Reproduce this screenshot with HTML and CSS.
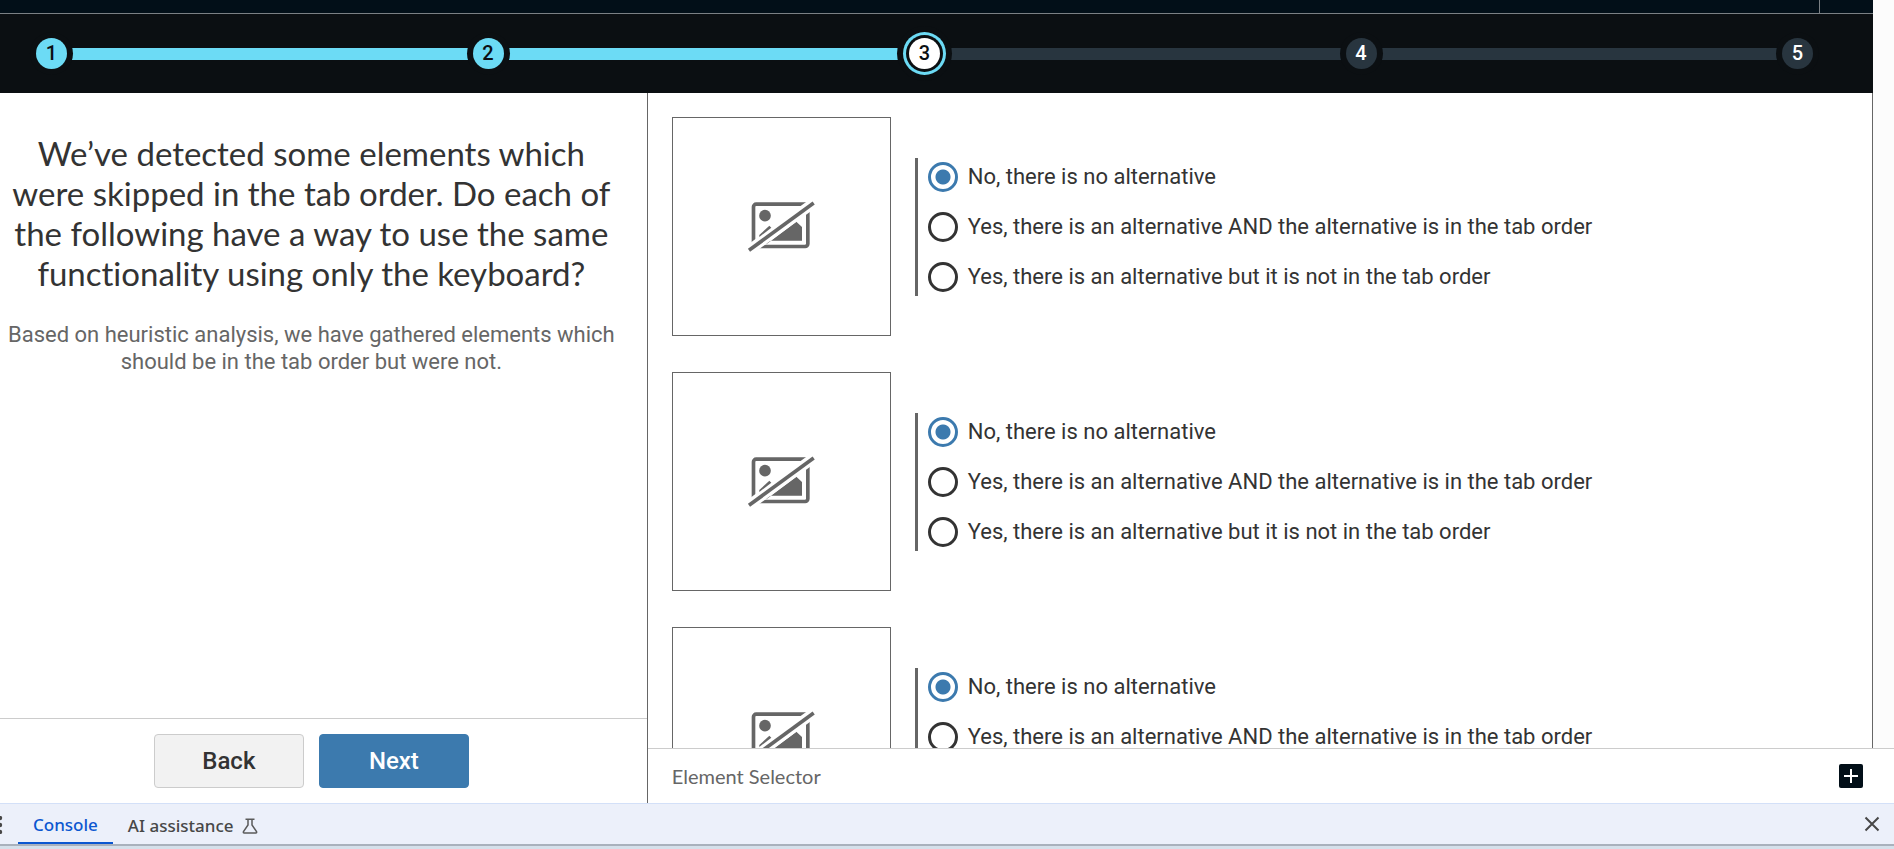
FILE: index.html
```html
<!DOCTYPE html>
<html lang="en">
<head>
<meta charset="utf-8">
<title>Keyboard guided test</title>
<link rel="stylesheet" href="styles.css">
</head>
<body>
<svg class="defs" aria-hidden="true">
  <symbol id="no-image" viewBox="49 57 210 165">
    <rect x="71.500" y="72.500" width="163" height="127" rx="8" fill="none" stroke="#666" stroke-width="11"/>
    <circle cx="106" cy="107" r="17.500" fill="#666"/>
    <path d="M110 193 L200 125 L217 141 V182 H110Z" fill="#666"/>
    <path d="M42 222 L268 57" stroke="#fff" stroke-width="31"/>
    <path d="M89 171 V165 L119 137 L125 143Z" fill="#666"/>
    <path d="M58 211 L252 69" stroke="#666" stroke-width="11"/>
  </symbol>
</svg>
<main class="app">
  <div class="topbar"><div class="topbar-action"></div></div>
  <ol class="steps">
    <li class="step done"><span class="dot">1</span></li>
    <li class="step done"><span class="dot">2</span></li>
    <li class="step current" aria-current="step"><span class="dot">3</span></li>
    <li class="step"><span class="dot">4</span></li>
    <li class="step"><span class="dot">5</span></li>
  </ol>
  <div class="panes">
    <section class="question">
      <div class="question-text">
        <h1>We’ve detected some elements which were skipped in the tab order. Do each of the following have a way to use the same functionality using only the keyboard?</h1>
        <p>Based on heuristic analysis, we have gathered elements which should be in the tab order but were not.</p>
      </div>
      <div class="actions">
        <button class="btn" type="button">Back</button>
        <button class="btn primary" type="button">Next</button>
      </div>
    </section>
    <section class="answers">
      <div class="items">
        <div class="item">
          <div class="thumb"><svg class="thumb-icon"><use href="#no-image"/></svg></div>
          <div class="options" role="radiogroup" aria-label="Element 1">
            <label class="option"><input type="radio" name="e1" checked>No, there is no alternative</label>
            <label class="option"><input type="radio" name="e1">Yes, there is an alternative AND the alternative is in the tab order</label>
            <label class="option"><input type="radio" name="e1">Yes, there is an alternative but it is not in the tab order</label>
          </div>
        </div>
        <div class="item">
          <div class="thumb"><svg class="thumb-icon"><use href="#no-image"/></svg></div>
          <div class="options" role="radiogroup" aria-label="Element 2">
            <label class="option"><input type="radio" name="e2" checked>No, there is no alternative</label>
            <label class="option"><input type="radio" name="e2">Yes, there is an alternative AND the alternative is in the tab order</label>
            <label class="option"><input type="radio" name="e2">Yes, there is an alternative but it is not in the tab order</label>
          </div>
        </div>
        <div class="item">
          <div class="thumb"><svg class="thumb-icon"><use href="#no-image"/></svg></div>
          <div class="options" role="radiogroup" aria-label="Element 3">
            <label class="option"><input type="radio" name="e3" checked>No, there is no alternative</label>
            <label class="option"><input type="radio" name="e3">Yes, there is an alternative AND the alternative is in the tab order</label>
            <label class="option"><input type="radio" name="e3">Yes, there is an alternative but it is not in the tab order</label>
          </div>
        </div>
      </div>
      <div class="selector">
        <span>Element Selector</span>
        <button class="expand" type="button" aria-label="Expand">
          <svg width="14" height="14" viewBox="0 0 14 14"><path d="M7 0V14M0 7H14" stroke="#fff" stroke-width="2"/></svg>
        </button>
      </div>
    </section>
  </div>
</main>
<footer class="drawer">
  <button class="more" type="button" aria-label="More tools">
    <svg width="3" height="18" viewBox="0 0 3 18" fill="#474747"><circle cx="0" cy="2" r="2.200"/><circle cx="0" cy="9" r="2.200"/><circle cx="0" cy="16" r="2.200"/></svg>
  </button>
  <button class="tab active" type="button">Console</button>
  <button class="tab" type="button">AI assistance
    <svg width="16" height="16" viewBox="0 0 16 16" fill="none" stroke="#5a5a5a" stroke-width="1.500"><path d="M3.500 1.200H12.500M6 1.200V7L1.500 13.500Q1 15 2.200 15H13.800Q15 15 14.500 13.500L10 7V1.200"/></svg>
  </button>
  <button class="close" type="button" aria-label="Close">
    <svg width="16" height="16" viewBox="0 0 16 16"><path d="M1.500 1.500L14.500 14.500M14.500 1.500L1.500 14.500" stroke="#474747" stroke-width="2"/></svg>
  </button>
</footer>
</body>
</html>
```
FILE: styles.css
```css
* { box-sizing: border-box; }

body {
  margin: 0;
  height: 100vh;
  display: flex;
  flex-direction: column;
  overflow: hidden;
  background: #fcfcfc;
  color: #333;
  font: 22px/28px Roboto, sans-serif;
}

button { font: inherit; color: inherit; border: 0; padding: 0; background: none; }

.defs { position: absolute; width: 0; height: 0; }

.app { flex: 1; min-height: 0; display: flex; flex-direction: column; }

.topbar {
  height: 14px;
  margin-right: 21px;
  padding-right: 53px;
  display: flex;
  justify-content: flex-end;
  background: #020f18;
  border-bottom: 1px solid #7b8084;
}
.topbar-action { border-right: 1px solid #7b8084; }

.steps {
  display: flex;
  align-items: center;
  height: 79px;
  margin: 0 21px 0 0;
  padding: 0 60px 0 36px;
  list-style: none;
  background: #0b0f12;
  color: #fff;
}
.step { flex: 1; display: flex; align-items: center; }
.step:last-child { flex: none; }
.step:not(:last-child)::after { content: ""; flex: 1; height: 12px; background: #28353f; }
.step.done::after { background: #6cdbf5; }
.dot {
  position: relative;
  z-index: 1;
  width: 31px;
  height: 31px;
  border-radius: 50%;
  text-align: center;
  font-size: 20px;
  line-height: 31px;
  font-weight: 500;
  background: #28353f;
  box-shadow: 0 0 0 6px #0b0f12;
}
.done .dot { background: #6cdbf5; color: #0b0f12; }
.current .dot {
  background: #fff;
  color: #0b0f12;
  box-shadow: 0 0 0 3px #0b0f12, 0 0 0 6px #6cdbf5, 0 0 0 12px #0b0f12;
}

.panes { flex: 1; min-height: 0; display: flex; }

.question {
  width: 34.2%;
  display: flex;
  flex-direction: column;
  border-right: 1px solid #666;
  background: #fff;
  text-align: center;
}
.question-text { flex: 1; padding: 40px 24px 0 0; }
h1 { margin: 0; font: 400 33px/40px Lato, sans-serif; font-variant-ligatures: none; }
p { margin: 28px 0 0; line-height: 27px; color: #666; }

.actions {
  display: flex;
  justify-content: center;
  gap: 15px;
  padding: 15px 24px 15px 0;
  border-top: 1px solid #ccc;
}
.btn {
  width: 150px;
  height: 54px;
  border: 1px solid #ccc;
  border-radius: 4px;
  background: #f2f2f2;
  font-size: 24px;
  font-weight: 500;
}
.btn.primary { border-color: #3c7aae; background: #3c7aae; color: #fff; }

.answers { flex: 1; min-width: 0; display: flex; flex-direction: column; }
.items {
  flex: 1;
  min-height: 0;
  overflow: hidden;
  display: flex;
  flex-direction: column;
  gap: 36px;
  margin-right: 21px;
  padding: 24px;
  background: #fff;
  border-right: 1px solid #666;
}
.item { flex: none; display: flex; align-items: center; gap: 24px; }
.thumb {
  display: flex;
  align-items: center;
  justify-content: center;
  width: 219px;
  height: 219px;
  border: 1px solid #666;
}
.thumb-icon { width: 70px; height: 55px; }
.options {
  display: flex;
  flex-direction: column;
  gap: 20px;
  padding: 4px 0 4px 10px;
  border-left: 3px solid #666;
}
.option { display: flex; align-items: center; gap: 10px; }
.option input {
  appearance: none;
  width: 30px;
  height: 30px;
  margin: 0;
  border: 3px solid #333;
  border-radius: 50%;
  background: #fff;
}
.option input:checked {
  border-color: #3c7aae;
  background: radial-gradient(circle, #3c7aae 7px, #fff 8px);
}

.selector {
  display: flex;
  align-items: center;
  justify-content: space-between;
  height: 55px;
  padding: 0 31px 0 24px;
  border-top: 1px solid #ccc;
  background: #fff;
  color: #666;
  font: 20px/26px Lato, sans-serif;
}
.expand {
  display: grid;
  place-items: center;
  width: 24px;
  height: 24px;
  border-radius: 2px;
  background: #020f18;
}

.drawer {
  display: flex;
  height: 46px;
  padding-right: 14px;
  border-top: 1px solid #d3e0f8;
  border-bottom: 3px solid #d5e0ea;
  box-shadow: inset 0 -2px #a9b1bc;
  background: #ecf0fa;
  color: #474747;
  font: 500 17px/24px "Noto Sans", sans-serif;
}
.more { display: grid; place-items: center start; width: 18px; }
.tab { display: flex; align-items: center; gap: 8px; padding: 2px 15px 0; }
.tab.active { border-bottom: 2px solid #0b57d0; color: #0b57d0; padding-top: 4px; margin-bottom: 2px; border-radius: 2px 2px 0 0; }
.close { display: grid; place-items: center; margin-left: auto; padding-bottom: 2px; }
```
